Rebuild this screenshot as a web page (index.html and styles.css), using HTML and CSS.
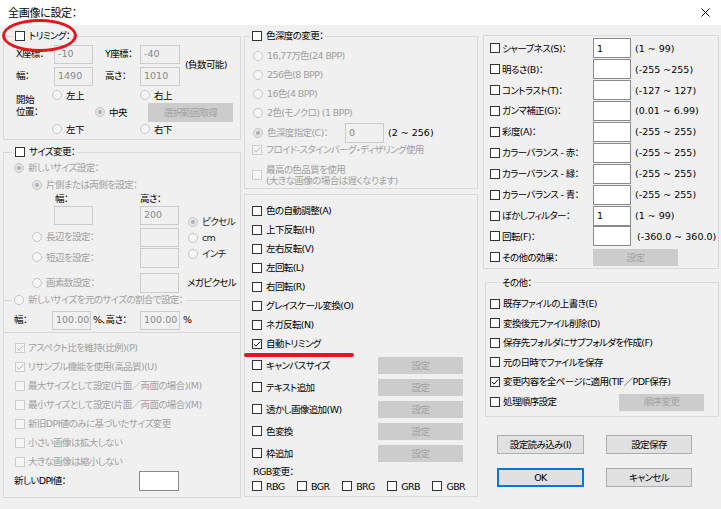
FILE: index.html
```html
<!DOCTYPE html>
<html lang="ja">
<head>
<meta charset="utf-8">
<title>全画像に設定</title>
<link rel="stylesheet" href="styles.css">
</head>
<body>
<div class="dialog">
  <div class="titlebar">
    <span class="title">全画像に設定：</span>
    <svg class="close" width="9" height="9" viewBox="0 0 9 9"><path d="M0.5 0.5 L8.5 8.5 M8.5 0.5 L0.5 8.5" stroke="#000" stroke-width="1" fill="none"/></svg>
  </div>

  <div class="main">
    <!-- column 1 -->
    <div class="col col1">
      <fieldset class="grp trim">
        <legend class="lg-trim"><span class="cb"></span>トリミング：</legend>
        <div class="trim-grid">
          <span>X座標：</span><span class="tb dis">-10</span><span>Y座標：</span><span class="tb dis w40">-40</span><span class="neg">(負数可能)</span>
          <span>幅：</span><span class="tb dis">1490</span><span>高さ：</span><span class="tb dis w40">1010</span>
        </div>
        <div class="pos-grid">
          <span class="pos-label">開始<br>位置：</span>
          <span class="opt a1"><span class="rd"></span>左上</span>
          <span class="opt c1"><span class="rd"></span>右上</span>
          <span class="opt b2"><span class="rd sel"></span>中央</span>
          <span class="btn dis c2">選択範囲取得</span>
          <span class="opt a3"><span class="rd"></span>左下</span>
          <span class="opt c3"><span class="rd"></span>右下</span>
        </div>
      </fieldset>

      <fieldset class="grp resize">
        <legend class="lg-resize"><span class="cb"></span>サイズ変更：</legend>
        <div class="row h18 pl10 dim"><span class="rd sel"></span>新しいサイズ設定：</div>
        <div class="row h16 pl28 dim"><span class="rd sel"></span>片側または両側を設定：</div>
        <div class="row h12 pl51"><span class="w85">幅：</span><span>高さ：</span></div>
        <div class="unit-area">
          <div class="unit-left">
            <div class="row h20 pl50"><span class="tb dis"></span><span class="tb dis ml47">200</span></div>
            <div class="row h20 mt2 pl28"><span class="lab108 dim"><span class="rd"></span>長辺を設定：</span><span class="tb dis"></span></div>
            <div class="row h21 pl28"><span class="lab108 dim"><span class="rd"></span>短辺を設定：</span><span class="tb dis h20"></span></div>
          </div>
          <div class="units">
            <div class="row h17 unit"><span class="rd sel"></span>ピクセル</div>
            <div class="row h16 unit"><span class="rd"></span>cm</div>
            <div class="row h16 unit"><span class="rd"></span>インチ</div>
          </div>
        </div>
        <div class="row h20 mt5 pl28"><span class="lab108 dim"><span class="rd"></span>画素数設定：</span><span class="tb dis h20"></span><span class="ml8">メガピクセル</span></div>
        <fieldset class="sub">
          <legend class="lg-sub dim"><span class="rd"></span>新しいサイズを元のサイズの割合で設定：</legend>
          <div class="row h20 mt3 pl10"><span class="w38">幅：</span><span class="tb dis">100.00</span><span class="ml2 w47">%、高さ：</span><span class="tb dis w40">100.00</span><span class="ml3">%</span></div>
        </fieldset>
        <div class="checks1">
          <div class="row h19 dim"><span class="cb dis"><svg viewBox="0 0 8 8"><path d="M0.8 4 L3 6.2 L7.2 1.6" stroke="#b4b4b4" stroke-width="1" fill="none"/></svg></span>アスペクト比を維持(比例)(P)</div>
          <div class="row h19 dim"><span class="cb dis"><svg viewBox="0 0 8 8"><path d="M0.8 4 L3 6.2 L7.2 1.6" stroke="#b4b4b4" stroke-width="1" fill="none"/></svg></span>リサンプル機能を使用(高品質)(U)</div>
          <div class="row h19 dim"><span class="cb dis"></span>最大サイズとして設定(片面／両面の場合)(M)</div>
          <div class="row h19 dim"><span class="cb dis"></span>最小サイズとして設定(片面／両面の場合)(M)</div>
          <div class="row h19 dim"><span class="cb dis"></span>新旧DPI値のみに基づいたサイズ変更</div>
          <div class="row h19 dim"><span class="cb dis"></span>小さい画像は拡大しない</div>
          <div class="row h19 dim"><span class="cb dis"></span>大きな画像は縮小しない</div>
        </div>
        <div class="row h20 pl10"><span class="w125">新しいDPI値：</span><span class="tb h20 w40"></span></div>
      </fieldset>
    </div>

    <!-- column 2 -->
    <div class="col col2">
      <fieldset class="grp depth">
        <legend class="lg-depth"><span class="cb"></span>色深度の変更：</legend>
        <div class="depth-rows">
          <div class="row h19 pl8 dim"><span class="rd"></span>16,77万色(24 BPP)</div>
          <div class="row h19 pl8 dim"><span class="rd"></span>256色(8 BPP)</div>
          <div class="row h19 pl8 dim"><span class="rd"></span>16色(4 BPP)</div>
          <div class="row h19 pl8 dim"><span class="rd"></span>2色(モノクロ) (1 BPP)</div>
          <div class="row h21 pl8"><span class="lab92 dim"><span class="rd sel"></span>色深度指定(C)：</span><span class="tb dis h20">0</span><span class="ml4 rng">(2 ~ 256)</span></div>
          <div class="row h13 pl7 dim"><span class="cb dis"><svg viewBox="0 0 8 8"><path d="M0.8 4 L3 6.2 L7.2 1.6" stroke="#b4b4b4" stroke-width="1" fill="none"/></svg></span>フロイド-スタインバーグ・ディザリング使用</div>
          <div class="row mt7 pl7 dim"><span class="cb dis"></span><span class="lh11">最高の色品質を使用<br>(大きな画像の場合は遅くなります)</span></div>
        </div>
      </fieldset>

      <fieldset class="grp effects">
        <div class="eff-rows">
          <div class="row h19"><span class="cb"></span>色の自動調整(A)</div>
          <div class="row h19"><span class="cb"></span>上下反転(H)</div>
          <div class="row h19"><span class="cb"></span>左右反転(V)</div>
          <div class="row h19"><span class="cb"></span>左回転(L)</div>
          <div class="row h19"><span class="cb"></span>右回転(R)</div>
          <div class="row h19"><span class="cb"></span>グレイスケール変換(O)</div>
          <div class="row h19"><span class="cb"></span>ネガ反転(N)</div>
          <div class="row h19"><span class="cb"><svg viewBox="0 0 8 8"><path d="M0.8 4 L3 6.2 L7.2 1.6" stroke="#000" stroke-width="1" fill="none"/></svg></span>自動トリミング</div>
        </div>
        <div class="btn-rows">
          <div class="row h21"><span class="lab126"><span class="cb"></span>キャンバスサイズ</span><span class="btn dis">設定</span></div>
          <div class="row h21"><span class="lab126"><span class="cb"></span>テキスト追加</span><span class="btn dis">設定</span></div>
          <div class="row h21"><span class="lab126"><span class="cb"></span>透かし画像追加(W)</span><span class="btn dis">設定</span></div>
          <div class="row h21"><span class="lab126"><span class="cb"></span>色変換</span><span class="btn dis">設定</span></div>
          <div class="row h21"><span class="lab126"><span class="cb"></span>枠追加</span><span class="btn dis">設定</span></div>
        </div>
        <div class="row h15 rgb-label">RGB変更：</div>
        <div class="rgb-grid">
          <span class="opt"><span class="cb"></span>RBG</span>
          <span class="opt"><span class="cb"></span>BGR</span>
          <span class="opt"><span class="cb"></span>BRG</span>
          <span class="opt"><span class="cb"></span>GRB</span>
          <span class="opt"><span class="cb"></span>GBR</span>
        </div>
        <div class="redline"></div>
      </fieldset>
    </div>

    <!-- column 3 -->
    <div class="col col3">
      <fieldset class="grp adjust">
        <div class="adj-rows">
          <div class="row adj"><span class="lab103"><span class="cb"></span>シャープネス(S)：</span><span class="tb w38">1</span><span class="ml4 rng">(1 ~ 99)</span></div>
          <div class="row adj"><span class="lab103"><span class="cb"></span>明るさ(B)：</span><span class="tb w38"></span><span class="ml4 rng">(-255 ~255)</span></div>
          <div class="row adj"><span class="lab103"><span class="cb"></span>コントラスト(T)：</span><span class="tb w38"></span><span class="ml4 rng">(-127 ~ 127)</span></div>
          <div class="row adj"><span class="lab103"><span class="cb"></span>ガンマ補正(G)：</span><span class="tb w38"></span><span class="ml4 rng">(0.01 ~ 6.99)</span></div>
          <div class="row adj"><span class="lab103"><span class="cb"></span>彩度(A)：</span><span class="tb w38"></span><span class="ml4 rng">(-255 ~ 255)</span></div>
          <div class="row adj"><span class="lab103"><span class="cb"></span>カラーバランス - 赤：</span><span class="tb w38"></span><span class="ml4 rng">(-255 ~ 255)</span></div>
          <div class="row adj"><span class="lab103"><span class="cb"></span>カラーバランス - 緑：</span><span class="tb w38"></span><span class="ml4 rng">(-255 ~ 255)</span></div>
          <div class="row adj"><span class="lab103"><span class="cb"></span>カラーバランス - 青：</span><span class="tb w38"></span><span class="ml4 rng">(-255 ~ 255)</span></div>
          <div class="row adj"><span class="lab103"><span class="cb"></span>ぼかしフィルター：</span><span class="tb w38">1</span><span class="ml4 rng">(1 ~ 99)</span></div>
          <div class="row adj"><span class="lab103"><span class="cb"></span>回転(F)：</span><span class="tb w38"></span><span class="ml6 rng">(-360.0 ~ 360.0)</span></div>
          <div class="row adj"><span class="lab103"><span class="cb"></span>その他の効果：</span><span class="btn dis">設定</span></div>
        </div>
      </fieldset>

      <fieldset class="grp misc">
        <legend class="lg-misc">その他：</legend>
        <div class="misc-rows">
          <div class="row h195"><span class="cb"></span>既存ファイルの上書き(E)</div>
          <div class="row h195"><span class="cb"></span>変換後元ファイル削除(D)</div>
          <div class="row h195"><span class="cb"></span>保存先フォルダにサブフォルダを作成(F)</div>
          <div class="row h195"><span class="cb"></span>元の日時でファイルを保存</div>
          <div class="row h195"><span class="cb"><svg viewBox="0 0 8 8"><path d="M0.8 4 L3 6.2 L7.2 1.6" stroke="#000" stroke-width="1" fill="none"/></svg></span>変更内容を全ページに適用(TIF／PDF保存)</div>
          <div class="row h21"><span class="lab129"><span class="cb"></span>処理順序設定</span><span class="btn dis">順序変更</span></div>
        </div>
      </fieldset>

      <div class="actions">
        <span class="btn act">設定読み込み(I)</span>
        <span class="btn act">設定保存</span>
        <span class="btn act default">OK</span>
        <span class="btn act">キャンセル</span>
      </div>
    </div>
  </div>

  <div class="ellipse"></div>
</div>
</body>
</html>
```

FILE: styles.css
```css
* { box-sizing: border-box; }
html, body { margin: 0; padding: 0; }
body {
  width: 721px; height: 509px; overflow: hidden;
  background: #f0f0f0;
  font-family: "DejaVu Sans", "Noto Sans CJK JP", sans-serif;
  font-size: 9.5px;
  line-height: 1.2;
  letter-spacing: -0.6px;
  color: #000;
  font-feature-settings: "palt" 1;
}
.dialog { position: relative; width: 721px; height: 509px; }

.titlebar {
  height: 25px; background: #fff;
  display: flex; align-items: center; justify-content: space-between;
  padding: 0 11px 0 8px;
}
.title { font-family: "Noto Sans CJK JP", sans-serif; font-size: 11px; letter-spacing: -0.3px; }

.main { display: flex; align-items: flex-start; padding: 4px 0 0 3px; }
.col { display: flex; flex-direction: column; }
.col1 { width: 238px; }
.col2 { width: 234px; margin-left: 3px; }
.col3 { width: 236px; margin-left: 5px; }

/* group boxes */
.grp { margin: 0; padding: 0; border: 1px solid #d9d9d9; min-width: 0; }
.grp legend, .sub legend {
  display: flex; align-items: center; height: 14px; padding: 0 2px; white-space: nowrap;
}
.sub {
  margin: 0; padding: 0 0 2px; min-width: 0;
  border: none; border-top: 1px solid #d9d9d9; border-bottom: 1px solid #d9d9d9;
}
.lg-trim { margin-left: 9px; }
.lg-resize { margin-left: 9px; }
.lg-sub { margin-left: 8px; }
.lg-depth { margin-left: 5px; }
.lg-misc { margin-left: 10px; }

/* widgets */
.cb {
  flex: none; display: inline-flex; align-items: center; justify-content: center;
  width: 10px; height: 10px; margin-right: 4px;
  border: 1px solid #333; background: #fff;
}
.cb.dis { border-color: #cdcdcd; background: #f6f6f6; }
.cb svg { width: 8px; height: 8px; display: block; }

.rd {
  flex: none; position: relative; display: inline-block;
  width: 10px; height: 10px; margin-right: 4px;
  border: 1px solid #c6c6c6; border-radius: 50%; background: #f6f6f6;
}
.rd.sel { background: #e4e4e4; }
.rd.sel::after {
  content: ""; position: absolute; left: 2px; top: 2px;
  width: 4px; height: 4px; border-radius: 50%; background: #b0b0b0;
}

.tb {
  flex: none; display: inline-flex; align-items: center;
  width: 39px; height: 19px; padding-left: 3px; letter-spacing: 0;
  border: 1px solid #8a8a8a; background: #fff; white-space: nowrap;
}
.tb.dis { border-color: #cccccc; background: #f0f0f0; color: #888; }
.rng { letter-spacing: 0; }

.btn {
  flex: none; display: inline-flex; align-items: center; justify-content: center;
  width: 85px; height: 17px; border: 1px solid #adadad; background: #e1e1e1; white-space: nowrap;
}
.btn.dis { background: #cccccc; border-color: #cccccc; color: #a2a2a2; }

.dim { color: #a0a0a0; }
.row { display: flex; align-items: center; white-space: nowrap; }
.opt { display: flex; align-items: center; white-space: nowrap; }

/* sizes & spacing helpers */
.h12 { height: 12px; } .h13 { height: 13px; } .h15 { height: 15px; } .h16 { height: 16px; }
.h17 { height: 17px; } .h18 { height: 18px; } .h19 { height: 19px; } .h195 { height: 19.5px; }
.h20 { height: 20px; } .h21 { height: 21px; }
.tb.h20 { height: 20px; }
.w38 { width: 38px; } .w40 { width: 40px; } .w47 { width: 47px; } .w85 { width: 85px; } .w125 { width: 125px; }
.tb.w38 { width: 38px; } .tb.w40 { width: 40px; }
.pl7 { padding-left: 7px; } .pl8 { padding-left: 8px; } .pl10 { padding-left: 10px; }
.pl28 { padding-left: 28px; } .pl50 { padding-left: 50px; } .pl51 { padding-left: 51px; }
.mt2 { margin-top: 2px; } .mt3 { margin-top: 3px; } .mt5 { margin-top: 5px; } .mt7 { margin-top: 7px; }
.ml2 { margin-left: 2px; } .ml3 { margin-left: 3px; } .ml4 { margin-left: 4px; } .ml6 { margin-left: 6px; }
.ml8 { margin-left: 8px; } .ml47 { margin-left: 47px; }
.lab92, .lab103, .lab108, .lab126, .lab129 { display: flex; align-items: center; flex: none; white-space: nowrap; }
.lab92 { width: 92px; } .lab103 { width: 103px; } .lab108 { width: 108px; }
.lab126 { width: 126px; } .lab129 { width: 129px; }
.lh11 { line-height: 11px; }

/* trimming */
.trim-grid {
  display: grid; grid-template-columns: 38px 51px 35px 45px auto;
  grid-template-rows: 22px 22px; align-items: center; padding-left: 12px; white-space: nowrap;
}
.neg { grid-column: 5; grid-row: 1 / 3; }
.pos-grid {
  display: grid; grid-template-columns: 36px 43px 45px auto;
  grid-template-rows: 17px 17px 17px; align-items: center; padding-left: 12px; margin-bottom: 1px;
}
.pos-label { grid-column: 1; grid-row: 1 / 4; align-self: start; margin-top: 7px; line-height: 12px; }
.a1 { grid-column: 2; grid-row: 1; }
.c1 { grid-column: 4; grid-row: 1; }
.b2 { grid-column: 3; grid-row: 2; }
.c2 { grid-column: 4; grid-row: 2; margin-left: 8px; height: 19px; }
.a3 { grid-column: 2; grid-row: 3; }
.c3 { grid-column: 4; grid-row: 3; }

/* resize */
.resize { margin-top: 5px; padding-bottom: 6px; }
.unit-area { display: flex; }
.unit-left { width: 180px; }
.units { padding-top: 8px; padding-left: 4px; color: #222; }
.checks1 { margin-top: 5px; padding-left: 11px; }
.checks1 .cb { margin-right: 3px; }

/* color depth */
.depth { padding-bottom: 2px; }
.depth-rows { margin-top: 3.5px; }

/* effects */
.effects { position: relative; margin-top: 5.5px; padding: 0 0 2px 7px; }
.eff-rows { margin-top: 6.5px; }
.btn-rows { margin-top: 1.5px; display: flex; flex-direction: column; gap: 1px; }
.rgb-label { padding-left: 1px; }
.rgb-grid { display: grid; grid-template-columns: repeat(4, 45.1px) auto; height: 15px; align-items: center; }
.redline {
  position: absolute; left: -1px; top: 158px; width: 110px; height: 4px;
  background: #e3151d; border-radius: 2px;
}

/* adjustments */
.adjust { margin-top: 6px; padding-left: 6px; }
.adj-rows { margin-top: 2px; }
.adj { height: 20.9px; }
.adj .cb { margin-right: 2px; }
.adj .tb { height: 20px; }

/* misc */
.misc { margin-top: 7px; margin-left: 2px; width: 234px; padding: 0 0 3px 4px; }
.misc-rows { margin-top: 4.25px; }
.misc .cb { margin-right: 3px; }

.actions {
  display: grid; grid-template-columns: 87px 86px; column-gap: 22px; row-gap: 14px;
  margin-top: 18.3px; padding-left: 14px;
}
.btn.act { width: auto; height: 19px; }
.btn.default { border-color: #0078d7; box-shadow: inset 0 0 0 1px #0078d7; }

.ellipse {
  position: absolute; left: 2px; top: 19px; width: 75px; height: 33px;
  border: 3.5px solid #e3151d; border-radius: 50%;
}
```
